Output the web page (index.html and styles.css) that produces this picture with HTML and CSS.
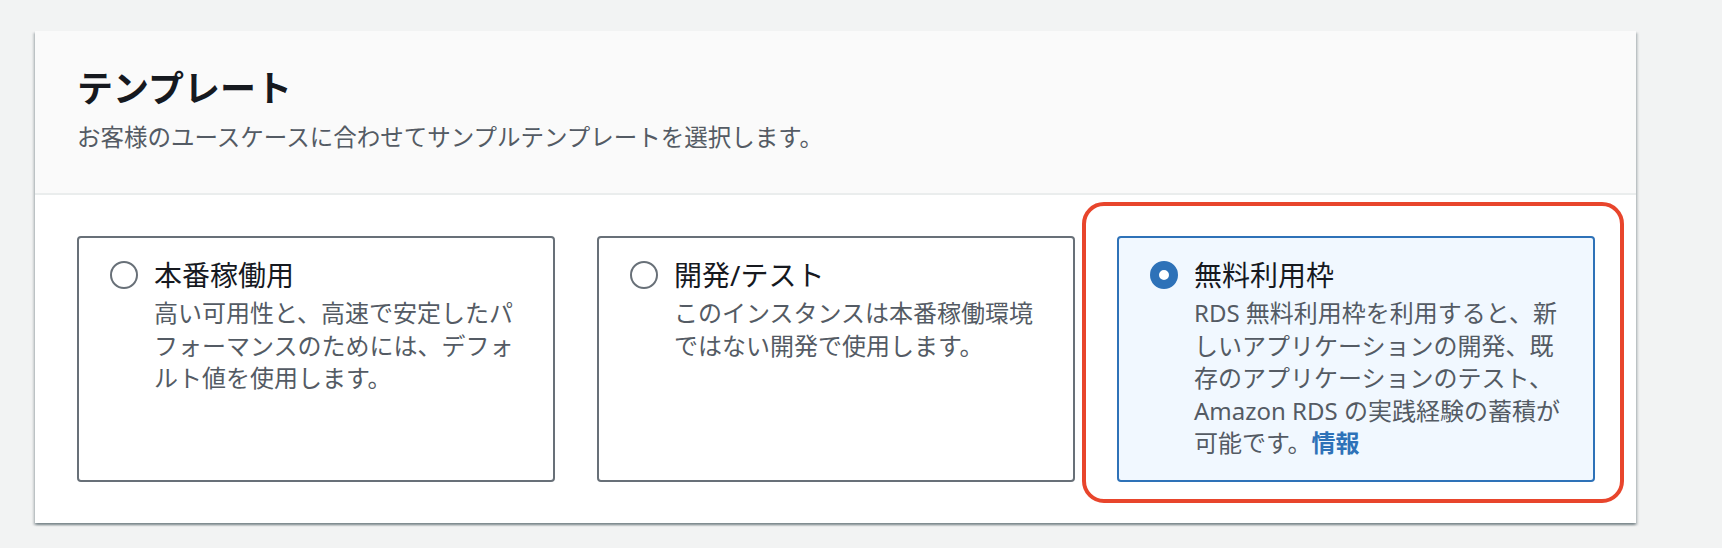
FILE: index.html
```html
<!DOCTYPE html>
<html lang="ja">
<head>
<meta charset="utf-8">
<title>テンプレート</title>
<link rel="stylesheet" href="styles.css">
</head>
<body>
<div class="page">
  <section class="card">
    <header class="card-header">
      <h2 class="card-title">テンプレート</h2>
      <p class="card-desc">お客様のユースケースに合わせてサンプルテンプレートを選択します。</p>
    </header>
    <div class="card-body">
      <div class="tiles">
        <label class="tile">
          <span class="radio-wrap"><span class="radio"></span></span>
          <span class="tile-text">
            <span class="tile-title">本番稼働用</span>
            <span class="tile-desc">高い可用性と、高速で安定したパ<br>フォーマンスのためには、デフォ<br>ルト値を使用します。</span>
          </span>
        </label>
        <label class="tile">
          <span class="radio-wrap"><span class="radio"></span></span>
          <span class="tile-text">
            <span class="tile-title">開発/テスト</span>
            <span class="tile-desc">このインスタンスは本番稼働環境<br>ではない開発で使用します。</span>
          </span>
        </label>
        <label class="tile tile-selected">
          <span class="radio-wrap"><span class="radio radio-checked"></span></span>
          <span class="tile-text">
            <span class="tile-title">無料利用枠</span>
            <span class="tile-desc">RDS 無料利用枠を利用すると、新<br>しいアプリケーションの開発、既<br>存のアプリケーションのテスト、<br>Amazon RDS の実践経験の蓄積が<br>可能です。<a class="info-link" href="#">情報</a></span>
          </span>
          <span class="highlight"></span>
        </label>
      </div>
    </div>
  </section>
</div>
</body>
</html>
```
FILE: styles.css
```css
* { box-sizing: border-box; }

html, body {
  margin: 0;
  padding: 0;
  background: #f2f3f3;
  font-family: "Noto Sans", "Noto Sans CJK JP", sans-serif;
  color: #16191f;
}

.page {
  padding: 31px 0 0 35px;
  height: 548px;
}

.card {
  width: 1601px;
  background: #ffffff;
  box-shadow: 0 2px 2px 0 rgba(0, 28, 36, 0.3),
              2px 2px 2px 0 rgba(0, 28, 36, 0.15),
              -2px 2px 2px 0 rgba(0, 28, 36, 0.15);
}

.card-header {
  background: #fafafa;
  border-bottom: 2px solid #eaeded;
  padding: 38px 42px 39px 42px;
}

.card-title {
  margin: 0;
  font-size: 36px;
  line-height: 40px;
  font-weight: 700;
  color: #16191f;
}

.card-desc {
  margin: 12px 0 0 0;
  font-size: 23.5px;
  line-height: 33px;
  color: #545b64;
}

.card-body {
  padding: 41px 41px 41px 42px;
}

.tiles {
  display: grid;
  grid-template-columns: repeat(3, 1fr);
  gap: 42px;
}

.tile {
  position: relative;
  display: flex;
  gap: 16px;
  height: 246px;
  padding: 20px 24px 20px 31px;
  border: 2px solid #687078;
  border-radius: 4px;
  background: #ffffff;
}

.tile-selected {
  border-color: #2e72b8;
  background: #f1f8ff;
}

.radio-wrap {
  display: flex;
  align-items: center;
  height: 34px;
  flex: none;
}

.radio {
  display: block;
  width: 28px;
  height: 28px;
  border-radius: 50%;
  border: 2px solid #687078;
  background: #ffffff;
}

.radio-checked {
  border: 9px solid #2e72b8;
}

.tile-text {
  display: flex;
  flex-direction: column;
  flex: 1;
}

.tile-title {
  font-size: 28px;
  line-height: 34px;
  color: #16191f;
}

.tile-desc {
  margin-top: 5px;
  font-size: 24px;
  line-height: 32.5px;
  color: #545b64;
  white-space: nowrap;
}

.info-link {
  color: #2e72b8;
  font-weight: 700;
  text-decoration: none;
}

.highlight {
  position: absolute;
  top: -36px;
  right: -31px;
  bottom: -23px;
  left: -37px;
  border: 4px solid #e8452c;
  border-radius: 22px;
  pointer-events: none;
}
```
